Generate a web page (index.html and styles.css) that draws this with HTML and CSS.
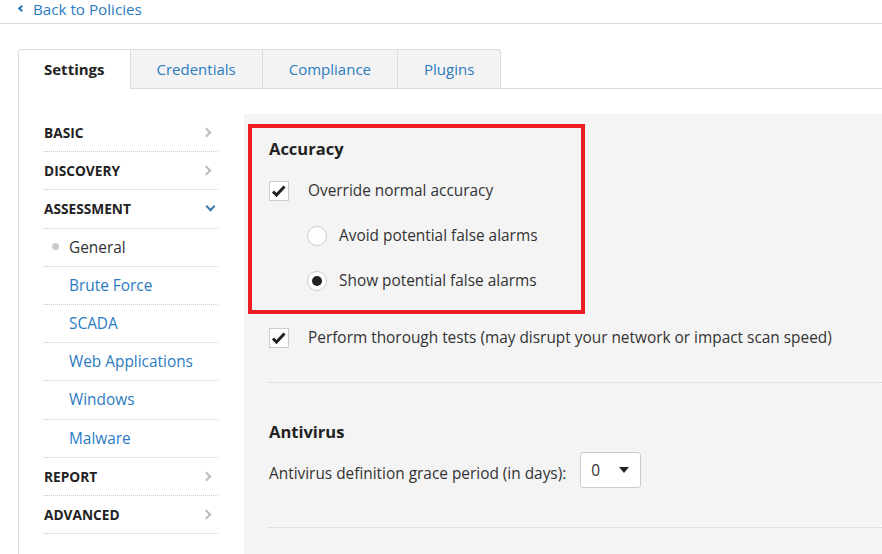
FILE: index.html
```html
<!DOCTYPE html>
<html lang="en">
<head>
    <meta charset="UTF-8">
    <meta name="viewport" content="width=device-width, initial-scale=1.0">
    <title>Policy Settings</title>
    <link rel="stylesheet" href="styles.css">
</head>
<body>
    <div class="topbar">
        <a href="#" class="back-link"><span class="back-arrow"></span>Back to Policies</a>
    </div>

    <div class="page">
        <!-- Tabs -->
        <ul class="tabs">
            <li class="tab active">Settings</li>
            <li class="tab">Credentials</li>
            <li class="tab">Compliance</li>
            <li class="tab">Plugins</li>
        </ul>

        <div class="panel">
            <!-- Side menu -->
            <nav class="side-menu">
                <div class="menu-row category">BASIC <span class="chev"></span></div>
                <div class="menu-row category">DISCOVERY <span class="chev"></span></div>
                <div class="menu-row category open">ASSESSMENT <span class="chev down"></span></div>
                <div class="menu-row sub current"><span class="dot"></span>General</div>
                <div class="menu-row sub">Brute Force</div>
                <div class="menu-row sub">SCADA</div>
                <div class="menu-row sub">Web Applications</div>
                <div class="menu-row sub">Windows</div>
                <div class="menu-row sub">Malware</div>
                <div class="menu-row category">REPORT <span class="chev"></span></div>
                <div class="menu-row category">ADVANCED <span class="chev"></span></div>
            </nav>

            <!-- Settings content -->
            <section class="content">
                <div class="highlight">
                    <h3>Accuracy</h3>
                    <div class="option first">
                        <span class="checkbox"><svg width="18" height="18" viewBox="0 0 18 18"><path d="M3 9.5 L6.5 13 L14.5 4.5" fill="none" stroke="#222" stroke-width="3"/></svg></span>
                        <span>Override normal accuracy</span>
                    </div>
                    <div class="option radio-option">
                        <span class="radio"></span>
                        <span>Avoid potential false alarms</span>
                    </div>
                    <div class="option radio-option">
                        <span class="radio selected"></span>
                        <span>Show potential false alarms</span>
                    </div>
                </div>

                <div class="section thorough">
                    <div class="option">
                        <span class="checkbox"><svg width="18" height="18" viewBox="0 0 18 18"><path d="M3 9.5 L6.5 13 L14.5 4.5" fill="none" stroke="#222" stroke-width="3"/></svg></span>
                        <span>Perform thorough tests (may disrupt your network or impact scan speed)</span>
                    </div>
                </div>

                <div class="section antivirus">
                    <h3>Antivirus</h3>
                    <div class="field">
                        <span class="field-label">Antivirus definition grace period (in days):</span>
                        <div class="select">0 <span class="caret"></span></div>
                    </div>
                </div>
            </section>
        </div>
    </div>
</body>
</html>
```

FILE: styles.css
```css
* {
    box-sizing: border-box;
}
body {
    font-family: "Open Sans", "Noto Sans", sans-serif;
    font-size: 15.4px;
    color: #333;
    background-color: #fff;
    margin: 0;
    padding: 0;
}
a {
    color: #2b7bbf;
    text-decoration: none;
}
.topbar {
    height: 24px;
    border-bottom: 1px solid #ddd;
    padding-left: 19px;
}
.back-link {
    display: flex;
    align-items: center;
    line-height: 19px;
    font-size: 15.2px;
}
.back-arrow {
    width: 5px;
    height: 5px;
    border-left: 2px solid #2b7bbf;
    border-bottom: 2px solid #2b7bbf;
    transform: rotate(45deg);
    margin-right: 9px;
    margin-top: -2px;
}
.page {
    padding-left: 18px;
    padding-top: 25px;
}
.tabs {
    display: flex;
    list-style: none;
    margin: 0;
    padding: 0;
    border-bottom: 1px solid #ddd;
}
.tab {
    height: 39px;
    line-height: 39px;
    padding: 0 26px;
    font-size: 15px;
    color: #2b7bbf;
    background-color: #f3f3f3;
    border: 1px solid #ddd;
    border-bottom: none;
    border-left: none;
}
.tab:first-child {
    border-left: 1px solid #ddd;
    border-radius: 3px 0 0 0;
}
.tab:last-child {
    border-radius: 0 3px 0 0;
}
.tab.active {
    background-color: #fff;
    color: #222;
    font-weight: bold;
    margin-bottom: -1px;
    height: 40px;
    padding: 0 25px;
}
.panel {
    display: flex;
    border-left: 1px solid #ddd;
    padding-top: 25px;
    height: 470px;
}
.side-menu {
    width: 174px;
    margin-left: 25px;
    margin-right: 26px;
    flex-shrink: 0;
}
.menu-row {
    height: 38.2px;
    border-bottom: 1px dotted #ccc;
    display: flex;
    align-items: center;
}
.menu-row.category {
    justify-content: space-between;
    font-weight: bold;
    font-size: 13.7px;
    color: #222;
}
.menu-row.sub {
    padding-left: 25px;
    color: #2b7bbf;
    font-size: 15.4px;
    position: relative;
}
.menu-row.current {
    color: #333;
}
.dot {
    position: absolute;
    left: 8px;
    top: 14px;
    width: 7px;
    height: 7px;
    border-radius: 50%;
    background-color: #ccc;
}
.chev {
    width: 7px;
    height: 7px;
    border-top: 2px solid #bbb;
    border-right: 2px solid #bbb;
    transform: rotate(45deg);
    margin-right: 8px;
}
.chev.down {
    border-color: #3a7aae;
    transform: rotate(135deg);
    margin-right: 4px;
    margin-top: -4px;
}
.content {
    flex: 1;
    background-color: #f4f4f4;
    padding: 10px 0 0 4px;
}
.content h3 {
    font-size: 16.5px;
    color: #222;
    margin: 0;
    line-height: 24px;
}
.highlight {
    width: 337px;
    border: 4px solid #ee1c25;
    padding: 9px 17px 7px 17px;
}
.option {
    display: flex;
    align-items: center;
    height: 45px;
}
.option.first {
    margin-top: 7px;
}
.radio-option {
    padding-left: 38px;
}
.checkbox {
    width: 20px;
    height: 20px;
    border: 1px solid #ccc;
    background-color: #fff;
    margin-right: 19px;
    flex-shrink: 0;
}
.checkbox svg {
    display: block;
}
.radio {
    width: 20px;
    height: 20px;
    border: 1px solid #ccc;
    border-radius: 50%;
    background-color: #fff;
    margin-right: 12px;
    display: flex;
    align-items: center;
    justify-content: center;
}
.radio.selected::after {
    content: "";
    width: 10px;
    height: 10px;
    border-radius: 50%;
    background-color: #222;
}
.section {
    margin-left: 21px;
    border-bottom: 1px dotted #ccc;
}
.section.thorough {
    padding-top: 1px;
    height: 69px;
}
.section.antivirus {
    padding-top: 37px;
    height: 145px;
}
.field {
    display: flex;
    align-items: flex-start;
    margin-top: 8px;
}
.field-label {
    padding-top: 11px;
}
.select {
    width: 61px;
    height: 36px;
    border: 1px solid #ccc;
    border-radius: 3px;
    background-color: #fff;
    margin-left: 14px;
    padding-left: 10px;
    padding-right: 11px;
    display: flex;
    align-items: center;
    justify-content: space-between;
}
.caret {
    width: 0;
    height: 0;
    border-left: 5px solid transparent;
    border-right: 5px solid transparent;
    border-top: 6px solid #222;
}
```
